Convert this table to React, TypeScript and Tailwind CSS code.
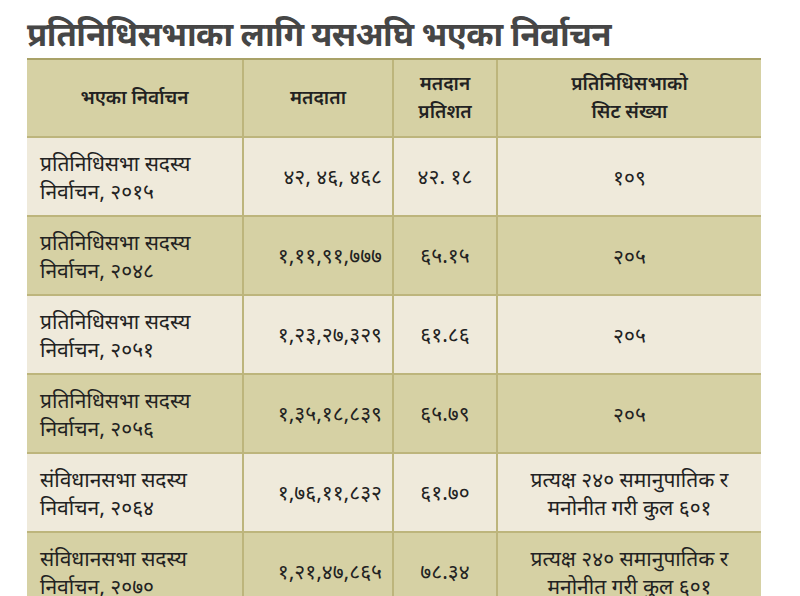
const rows = [
  { name: ["प्रतिनिधिसभा सदस्य", "निर्वाचन, २०१५"], voters: "४२, ४६, ४६८", pct: "४२. १८", seats: ["१०९"] },
  { name: ["प्रतिनिधिसभा सदस्य", "निर्वाचन, २०४८"], voters: "१,११,९१,७७७", pct: "६५.१५", seats: ["२०५"] },
  { name: ["प्रतिनिधिसभा सदस्य", "निर्वाचन, २०५१"], voters: "१,२३,२७,३२९", pct: "६१.८६", seats: ["२०५"] },
  { name: ["प्रतिनिधिसभा सदस्य", "निर्वाचन, २०५६"], voters: "१,३५,१८,८३९", pct: "६५.७९", seats: ["२०५"] },
  { name: ["संविधानसभा सदस्य", "निर्वाचन, २०६४"], voters: "१,७६,११,८३२", pct: "६१.७०", seats: ["प्रत्यक्ष २४० समानुपातिक र", "मनोनीत गरी कुल ६०१"] },
  { name: ["संविधानसभा सदस्य", "निर्वाचन, २०७०"], voters: "१,२१,४७,८६५", pct: "७८.३४", seats: ["प्रत्यक्ष २४० समानुपातिक र", "मनोनीत गरी कुल ६०१"] },
];

const font = { fontFamily: '"Noto Sans Devanagari", "Lohit Devanagari", "Noto Sans", sans-serif' };

export default function App() {
  return (
    <div className="w-[800px] h-[596px] overflow-hidden bg-white" style={font}>
      <div className="h-[58px] pl-[27px] pt-[18px]">
        <h1 className="text-[33px] leading-[40px] font-bold text-[#464646] tracking-[-0.6px] whitespace-nowrap">
          प्रतिनिधिसभाका लागि यसअघि भएका निर्वाचन
        </h1>
      </div>
      <div className="ml-[27px] w-[734px] border-t-2 border-[#a9a268] bg-[#bdb57c] grid grid-cols-[215px_148px_102px_263px] gap-[2px] text-[#222] text-[21px] leading-[28px]">
        <div className="bg-[#d6d1a4] h-[76px] flex items-center justify-center font-semibold text-[19px] pt-[4px]">भएका निर्वाचन</div>
        <div className="bg-[#d6d1a4] h-[76px] flex items-center justify-center font-semibold text-[19px] pt-[4px]">मतदाता</div>
        <div className="bg-[#d6d1a4] h-[76px] flex flex-col items-center justify-center font-semibold text-[19px] pt-[4px]">
          <span>मतदान</span>
          <span>प्रतिशत</span>
        </div>
        <div className="bg-[#d6d1a4] h-[76px] flex flex-col items-center justify-center font-semibold text-[19px] pt-[4px]">
          <span>प्रतिनिधिसभाको</span>
          <span>सिट संख्या</span>
        </div>
        {rows.map((r, i) => {
          const bg = i % 2 === 0 ? "bg-[#efeadb]" : "bg-[#d6d1a4]";
          return [
            <div key={`n${i}`} className={`${bg} h-[77px] flex flex-col justify-center pl-[13px] pt-[6px]`}>
              {r.name.map((l) => <span key={l}>{l}</span>)}
            </div>,
            <div key={`v${i}`} className={`${bg} h-[77px] flex items-center justify-end pr-[10px] pt-[4px]`}>{r.voters}</div>,
            <div key={`p${i}`} className={`${bg} h-[77px] flex items-center justify-center pt-[4px]`}>{r.pct}</div>,
            <div key={`s${i}`} className={`${bg} h-[77px] flex flex-col items-center justify-center pt-[6px]`}>
              {r.seats.map((l) => <span key={l}>{l}</span>)}
            </div>,
          ];
        })}
      </div>
    </div>
  );
}
